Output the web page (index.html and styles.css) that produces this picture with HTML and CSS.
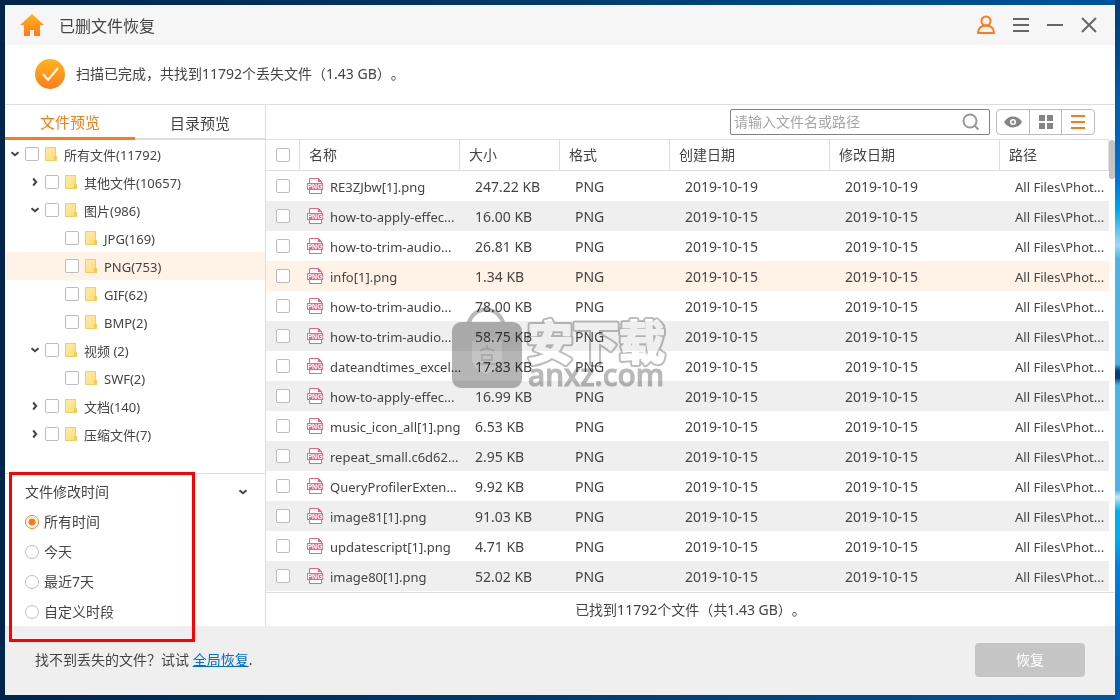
FILE: index.html
```
<!DOCTYPE html>
<html lang="zh-CN">
<head>
<meta charset="utf-8">
<title>已删文件恢复</title>
<link rel="stylesheet" href="styles.css">
</head>
<body>
<svg class="defs" aria-hidden="true">
  <defs>
    <linearGradient id="orange" x1="0" y1="0" x2="0" y2="1"><stop offset="0" stop-color="#ffb51c"/><stop offset="1" stop-color="#ff7a1a"/></linearGradient>
    <linearGradient id="yellow" x1="0" y1="0" x2="1" y2="1"><stop offset="0" stop-color="#ffeaa6"/><stop offset="1" stop-color="#ffdc78"/></linearGradient>
    <symbol id="folder" viewBox="0 0 12 14"><path d="M.5.5h10v8l1 1v4h-11z" fill="url(#yellow)" stroke="#f0cf5f"/><path d="M9 9h2.500v4.500H9z" fill="#f3cb4f"/></symbol>
    <symbol id="down" viewBox="0 0 10 6"><path d="M1.500 1.200 5 4.200l3.500-3" fill="none" stroke="#444" stroke-width="2"/></symbol>
    <symbol id="right" viewBox="0 0 6 10"><path d="M1.200 1.500 4.200 5l-3 3.500" fill="none" stroke="#444" stroke-width="2"/></symbol>
    <symbol id="png" viewBox="0 0 16 16"><path d="M2.500 5V.5h9l3 3V5M2.500 12v3.500h12V12" fill="#fff" stroke="#ee6387"/><path d="M11 0v4h4z" fill="#ee6387"/><path d="M0 5h16v7H0z" fill="#ee6387"/><text x="8" y="11" text-anchor="middle" font-family="Liberation Sans, sans-serif" font-size="7" font-weight="700" fill="#fff">PNG</text></symbol>
  </defs>
</svg>
<main class="window">
  <header class="titlebar">
    <svg class="home" viewBox="0 0 24 22" aria-hidden="true"><path d="M12 0 24 11h-4v11h-6v-6h-4v6H4V11H0z" fill="url(#orange)"/></svg>
    <h1>已删文件恢复</h1>
    <nav class="window-actions">
      <button aria-label="账户"><svg width="18" height="20" viewBox="1 0 18 20"><g fill="none" stroke="#ff7a14" stroke-width="2"><circle cx="10" cy="6" r="4.500"/><path d="M2 18c0-5 3.500-7.500 8-7.500s8 2.500 8 7.500z" stroke-linejoin="round"/></g></svg></button>
      <button aria-label="菜单"><svg width="16" height="16" viewBox="0 0 16 16"><path d="M0 2h16M0 8h16M0 14h16" stroke="#666" stroke-width="2"/></svg></button>
      <button aria-label="最小化"><svg width="16" height="16" viewBox="0 0 16 16"><path d="M0 8h16" stroke="#666" stroke-width="2"/></svg></button>
      <button aria-label="关闭"><svg width="16" height="16" viewBox="0 0 16 16"><path d="m1 1 14 14M15 1 1 15" stroke="#666" stroke-width="2"/></svg></button>
    </nav>
  </header>
  <section class="status">
    <svg width="30" height="30" viewBox="0 0 30 30" aria-hidden="true"><circle cx="15" cy="15" r="15" fill="url(#orange)"/><path d="m8 15 5 6L23 9" fill="none" stroke="#fff" stroke-width="2"/></svg>
    <p>扫描已完成，共找到11792个丢失文件（1.43 GB）。</p>
  </section>
  <div class="content">
    <aside class="sidebar">
      <div class="tabs" role="tablist">
        <button class="tab active" role="tab" aria-selected="true">文件预览</button>
        <button class="tab" role="tab" aria-selected="false">目录预览</button>
      </div>
      <ul class="tree">
        <li class="level0"><svg class="arrow"><use href="#down"/></svg><label><input type="checkbox"><svg class="folder"><use href="#folder"/></svg><span>所有文件(11792)</span></label></li>
        <li class="level1"><svg class="arrow"><use href="#right"/></svg><label><input type="checkbox"><svg class="folder"><use href="#folder"/></svg><span>其他文件(10657)</span></label></li>
        <li class="level1"><svg class="arrow"><use href="#down"/></svg><label><input type="checkbox"><svg class="folder"><use href="#folder"/></svg><span>图片(986)</span></label></li>
        <li class="level2"><label><input type="checkbox"><svg class="folder"><use href="#folder"/></svg><span>JPG(169)</span></label></li>
        <li class="level2 selected"><label><input type="checkbox"><svg class="folder"><use href="#folder"/></svg><span>PNG(753)</span></label></li>
        <li class="level2"><label><input type="checkbox"><svg class="folder"><use href="#folder"/></svg><span>GIF(62)</span></label></li>
        <li class="level2"><label><input type="checkbox"><svg class="folder"><use href="#folder"/></svg><span>BMP(2)</span></label></li>
        <li class="level1"><svg class="arrow"><use href="#down"/></svg><label><input type="checkbox"><svg class="folder"><use href="#folder"/></svg><span>视频 (2)</span></label></li>
        <li class="level2"><label><input type="checkbox"><svg class="folder"><use href="#folder"/></svg><span>SWF(2)</span></label></li>
        <li class="level1"><svg class="arrow"><use href="#right"/></svg><label><input type="checkbox"><svg class="folder"><use href="#folder"/></svg><span>文档(140)</span></label></li>
        <li class="level1"><svg class="arrow"><use href="#right"/></svg><label><input type="checkbox"><svg class="folder"><use href="#folder"/></svg><span>压缩文件(7)</span></label></li>
      </ul>
      <section class="filter">
        <h2>文件修改时间<svg class="arrow"><use href="#down"/></svg></h2>
        <label><input type="radio" name="period" checked>所有时间</label>
        <label><input type="radio" name="period">今天</label>
        <label><input type="radio" name="period">最近7天</label>
        <label><input type="radio" name="period">自定义时段</label>
        <div class="highlight"></div>
      </section>
    </aside>
    <section class="files">
      <div class="toolbar">
        <div class="search">
          <input type="text" aria-label="搜索" placeholder="请输入文件名或路径">
          <svg width="18" height="18" viewBox="0 0 18 18" aria-hidden="true"><g fill="none" stroke="#999" stroke-width="2"><circle cx="8" cy="8" r="6.500"/><path d="m12.500 12.500 4 4"/></g></svg>
        </div>
        <div class="views">
          <button aria-label="预览"><svg width="18" height="12" viewBox="0 0 18 12"><path d="M0 6c2-3.500 5.500-5.500 9-5.500S16 2.500 18 6c-2 3.500-5.500 5.500-9 5.500S2 9.500 0 6z" fill="#858585"/><circle cx="9" cy="6" r="3" fill="#fff"/><circle cx="9" cy="6" r="1.500" fill="#858585"/></svg></button>
          <button aria-label="网格"><svg width="14" height="14" viewBox="0 0 14 14"><path d="M0 0h6v6H0zM8 0h6v6H8zM0 8h6v6H0zM8 8h6v6H8z" fill="#858585"/></svg></button>
          <button aria-label="列表"><svg width="14" height="14" viewBox="0 0 14 14"><path d="M0 1h14M0 7h14M0 13h14" stroke="#ff7a14" stroke-width="2"/></svg></button>
        </div>
      </div>
      <div class="list">
        <div class="table-area">
        <table>
          <thead><tr><th class="c-check"><input type="checkbox" aria-label="全选"></th><th class="c-name">名称</th><th class="c-size">大小</th><th class="c-format">格式</th><th class="c-created">创建日期</th><th class="c-modified">修改日期</th><th>路径</th></tr></thead>
          <tbody>
            <tr><td><input type="checkbox" aria-label="选择"></td><td><span class="name"><svg class="png"><use href="#png"/></svg><span>RE3ZJbw[1].png</span></span></td><td>247.22 KB</td><td>PNG</td><td>2019-10-19</td><td>2019-10-19</td><td>All Files\Phot...</td></tr>
            <tr><td><input type="checkbox" aria-label="选择"></td><td><span class="name"><svg class="png"><use href="#png"/></svg><span>how-to-apply-effec...</span></span></td><td>16.00 KB</td><td>PNG</td><td>2019-10-15</td><td>2019-10-15</td><td>All Files\Phot...</td></tr>
            <tr><td><input type="checkbox" aria-label="选择"></td><td><span class="name"><svg class="png"><use href="#png"/></svg><span>how-to-trim-audio...</span></span></td><td>26.81 KB</td><td>PNG</td><td>2019-10-15</td><td>2019-10-15</td><td>All Files\Phot...</td></tr>
            <tr class="selected"><td><input type="checkbox" aria-label="选择"></td><td><span class="name"><svg class="png"><use href="#png"/></svg><span>info[1].png</span></span></td><td>1.34 KB</td><td>PNG</td><td>2019-10-15</td><td>2019-10-15</td><td>All Files\Phot...</td></tr>
            <tr><td><input type="checkbox" aria-label="选择"></td><td><span class="name"><svg class="png"><use href="#png"/></svg><span>how-to-trim-audio...</span></span></td><td>78.00 KB</td><td>PNG</td><td>2019-10-15</td><td>2019-10-15</td><td>All Files\Phot...</td></tr>
            <tr><td><input type="checkbox" aria-label="选择"></td><td><span class="name"><svg class="png"><use href="#png"/></svg><span>how-to-trim-audio...</span></span></td><td>58.75 KB</td><td>PNG</td><td>2019-10-15</td><td>2019-10-15</td><td>All Files\Phot...</td></tr>
            <tr><td><input type="checkbox" aria-label="选择"></td><td><span class="name"><svg class="png"><use href="#png"/></svg><span>dateandtimes_excel...</span></span></td><td>17.83 KB</td><td>PNG</td><td>2019-10-15</td><td>2019-10-15</td><td>All Files\Phot...</td></tr>
            <tr><td><input type="checkbox" aria-label="选择"></td><td><span class="name"><svg class="png"><use href="#png"/></svg><span>how-to-apply-effec...</span></span></td><td>16.99 KB</td><td>PNG</td><td>2019-10-15</td><td>2019-10-15</td><td>All Files\Phot...</td></tr>
            <tr><td><input type="checkbox" aria-label="选择"></td><td><span class="name"><svg class="png"><use href="#png"/></svg><span>music_icon_all[1].png</span></span></td><td>6.53 KB</td><td>PNG</td><td>2019-10-15</td><td>2019-10-15</td><td>All Files\Phot...</td></tr>
            <tr><td><input type="checkbox" aria-label="选择"></td><td><span class="name"><svg class="png"><use href="#png"/></svg><span>repeat_small.c6d62...</span></span></td><td>2.95 KB</td><td>PNG</td><td>2019-10-15</td><td>2019-10-15</td><td>All Files\Phot...</td></tr>
            <tr><td><input type="checkbox" aria-label="选择"></td><td><span class="name"><svg class="png"><use href="#png"/></svg><span>QueryProfilerExten...</span></span></td><td>9.92 KB</td><td>PNG</td><td>2019-10-15</td><td>2019-10-15</td><td>All Files\Phot...</td></tr>
            <tr><td><input type="checkbox" aria-label="选择"></td><td><span class="name"><svg class="png"><use href="#png"/></svg><span>image81[1].png</span></span></td><td>91.03 KB</td><td>PNG</td><td>2019-10-15</td><td>2019-10-15</td><td>All Files\Phot...</td></tr>
            <tr><td><input type="checkbox" aria-label="选择"></td><td><span class="name"><svg class="png"><use href="#png"/></svg><span>updatescript[1].png</span></span></td><td>4.71 KB</td><td>PNG</td><td>2019-10-15</td><td>2019-10-15</td><td>All Files\Phot...</td></tr>
            <tr><td><input type="checkbox" aria-label="选择"></td><td><span class="name"><svg class="png"><use href="#png"/></svg><span>image80[1].png</span></span></td><td>52.02 KB</td><td>PNG</td><td>2019-10-15</td><td>2019-10-15</td><td>All Files\Phot...</td></tr>
          </tbody>
        </table>
        </div>
        <div class="scroll"><div class="thumb"></div></div>
      </div>
      <p class="summary">已找到11792个文件（共1.43 GB）。</p>
      <svg class="watermark" width="240" height="100" viewBox="0 0 240 100" aria-hidden="true">
        <path d="M18 26C22 4 50 4 54 26" fill="none" stroke="#b9b9b9" stroke-width="4"/>
        <rect x="2" y="22" width="70" height="66" rx="9" fill="#b5b5b5"/>
        <path d="m37 36 15 5v18c0 7-6 11-15 15-9-4-15-8-15-15V41z" fill="#c4c4c4"/>
        <path d="M37 45v4M30 51c4-3 10-3 14 0M32 55h10v5H32zM29 64h16" fill="none" stroke="#acacac" stroke-width="2"/>
        <g font-size="46" font-weight="700" stroke-linejoin="round">
          <text x="77" y="59" class="outline">安下载</text>
          <text x="77" y="59" class="inner">安下载</text>
        </g>
        <text x="78" y="86" class="domain">anxz.com</text>
      </svg>
    </section>
  </div>
  <footer class="footer">
    <p>找不到丢失的文件？试试 <a href="#">全局恢复</a>.</p>
    <button class="recover">恢复</button>
  </footer>
</main>
</body>
</html>
```
FILE: styles.css
```
* { box-sizing: border-box; }
body {
  margin: 0;
  min-height: 100vh;
  padding: 5px;
  display: flex;
  background:
    linear-gradient(#003b73, #0067c0 20%, #0078d7 26%, #00a8ea 30%, #9fd8f5 35%, #4ab4e6 37%, #4ab4e6 52%, #00407f 53%, #00407f 54%, #4ab4e6 55%, #4ab4e6 70%, #c0e8fa 71%, #00aeee 73%, #00aeee 77%, #0080e0 81%, #0058a8) right / 5px 100% no-repeat,
    linear-gradient(90deg, #00254d, #003b6f 50%, #00549c);
  color: #444;
  font: 14px/20px "Noto Sans", "Noto Sans CJK SC", sans-serif;
  text-spacing-trim: space-all;
}
h1, h2, p, ul { margin: 0; padding: 0; font-weight: 400; }
button, input { font: inherit; color: inherit; margin: 0; }
button { border: 0; padding: 0; background: none; }
svg { display: block; flex: none; }
.defs { position: absolute; width: 0; height: 0; }
.window { flex: 1; min-width: 0; display: flex; flex-direction: column; background: #fff; }
.titlebar { height: 40px; display: flex; align-items: center; padding: 0 18px 0 15px; background: #f6f6f6; }
.home { width: 24px; height: 22px; }
h1 { margin-left: 15px; padding-top: 2px; font-size: 16px; line-height: 24px; }
.window-actions { margin-left: auto; display: flex; gap: 18px; align-items: center; }
.window-actions button { display: block; }
.status { height: 60px; display: flex; align-items: center; gap: 11px; padding: 0 0 1px 30px; border-bottom: 1px solid #dedede; }
.content { flex: 1; display: flex; min-height: 0; }
.sidebar { width: 261px; flex: none; display: flex; flex-direction: column; border-right: 1px solid #dedede; }
.tabs { display: flex; height: 35px; }
.tab { flex: 1; padding-top: 2px; font-size: 15px; border-bottom: 2px solid #dedede; }
.tab.active { color: #ff7a14; border-bottom: 3px solid #ff7a14; }

input[type="checkbox"], input[type="radio"] { appearance: none; display: block; flex: none; width: 14px; height: 14px; border: 1px solid #bcbcbc; border-radius: 2px; background: #fff; }
input[type="radio"] { border-radius: 50%; }
input[type="radio"]:checked { border: 1px solid #ff7a14; background: radial-gradient(circle, #ff7a14 3px, #fff 4px); }

.tree { flex: 1; list-style: none; font-size: 13px; }
.tree li { height: 28px; display: flex; align-items: center; gap: 5px; }
.tree label { display: flex; align-items: center; white-space: pre; }
.tree label span { padding-top: 2px; }
.tree .level0 { padding-left: 5px; }
.tree .level1 { padding-left: 25px; }
.tree .level2 { padding-left: 60px; }
.tree .selected { background: #fff2e6; }
.arrow { width: 10px; height: 10px; }
.folder { width: 12px; height: 14px; margin: 0 7px 0 6px; }

.filter { position: relative; height: 153px; border-top: 1px solid #dedede; padding: 3px 0 0 20px; }
.filter h2 { display: flex; align-items: center; justify-content: space-between; height: 30px; padding-right: 17px; font-size: 14px; }
.filter label { display: flex; align-items: center; gap: 5px; height: 30px; }
.highlight { position: absolute; left: 4px; top: -2px; width: 186px; height: 170px; border: 3px solid #f00; z-index: 1; pointer-events: none; }

.files { position: relative; flex: 1; min-width: 0; display: flex; flex-direction: column; }
.toolbar { height: 34px; display: flex; justify-content: flex-end; align-items: center; gap: 6px; padding-right: 20px; }
.search { width: 260px; height: 26px; display: flex; align-items: center; border: 1px solid #808080; border-radius: 2px; padding: 0 9px 0 3px; }
.search input { flex: 1; min-width: 0; border: 0; padding: 0; background: none; outline: 0; }
.search input::placeholder { color: #a5a5a5; }
.views { display: flex; width: 99px; height: 26px; border: 1px solid #bcbcbc; border-radius: 4px; }
.views button { flex: 1; display: flex; align-items: center; justify-content: center; }
.views button:not(:first-child) { border-left: 1px solid #bcbcbc; }

.list { flex: 1; display: flex; border-bottom: 1px solid #dedede; }
.table-area { flex: 1; min-width: 0; }
table { width: 100%; table-layout: fixed; border-collapse: separate; border-spacing: 0; }
th { height: 32px; padding: 0 0 0 9px; border: 1px solid #dedede; border-left: 0; font-weight: 400; text-align: left; }
td { height: 30px; padding: 2px 0 0 15px; white-space: nowrap; }
td:first-child, .c-check { padding: 0 0 0 10px; }
td:nth-child(2) { padding: 0 0 0 7px; font-size: 13px; }
td:last-child { font-size: 13px; }
tbody tr:nth-child(even) { background: #efefef; }
tbody .selected:nth-child(even) { background: #fff2e6; }
.c-check { width: 34px; }
.c-name { width: 160px; }
.c-size { width: 100px; }
.c-format { width: 110px; }
.c-created { width: 160px; }
.c-modified { width: 170px; }
.name { display: flex; align-items: center; gap: 7px; }
.name span { padding-top: 2px; }
.png { width: 16px; height: 16px; }
.scroll { width: 6px; padding-top: 1px; }
.thumb { height: 39px; border-radius: 3px; background: #c4c4c4; }
.summary { height: 33px; line-height: 33px; text-align: center; }
.watermark { position: absolute; left: 184px; top: 195px; mix-blend-mode: multiply; pointer-events: none; }
.watermark text { font-family: "Noto Sans", "Noto Sans CJK SC", sans-serif; }
.outline { fill: #bdbdbd; stroke: #bdbdbd; stroke-width: 6px; }
.inner { fill: #fff; stroke: #fff; stroke-width: 2px; }
.watermark .domain { font-size: 30px; font-weight: 500; fill: #b9b9b9; stroke: #b9b9b9; }

.footer { height: 69px; display: flex; align-items: center; justify-content: space-between; padding: 0 30px 2px; background: #efefef; }
.footer a { color: #0070cc; }
.recover { width: 110px; height: 34px; border-radius: 4px; background: #c5c5c5; color: #fff; }
```
